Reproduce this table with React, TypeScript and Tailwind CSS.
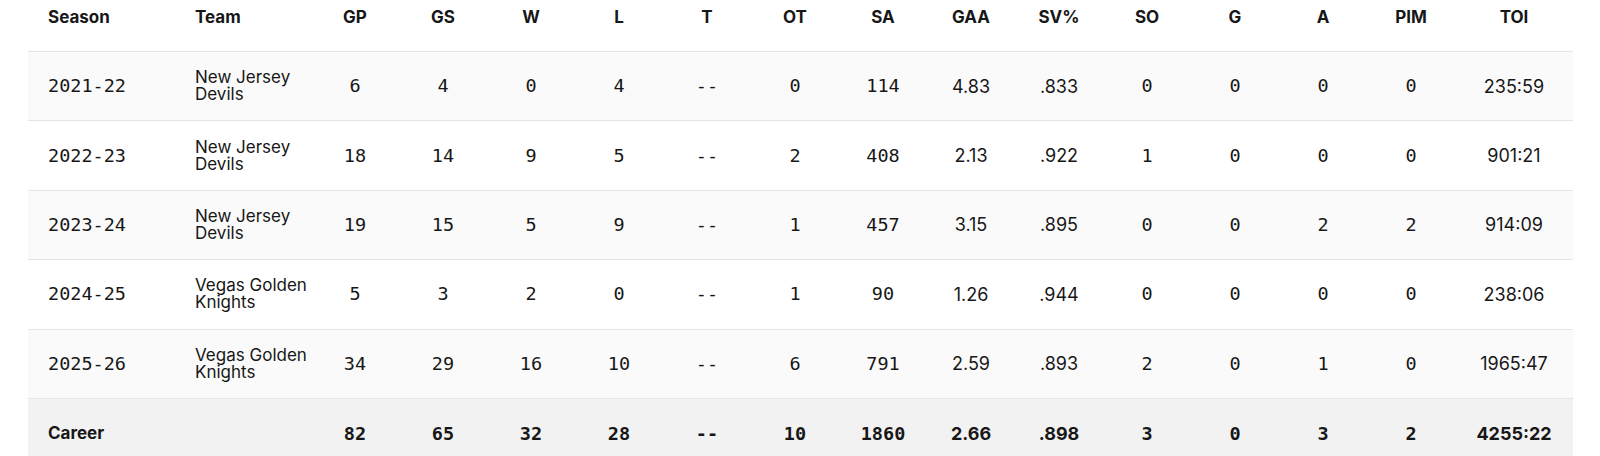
const cols = "grid grid-cols-[142px_141px_repeat(13,88px)_118px]"

const seasons = [
  { season: "2021-22", team: "New Jersey Devils", gp: 6, gs: 4, w: 0, l: 4, ot: 0, sa: 114, gaa: "4.83", sv: ".833", so: 0, g: 0, a: 0, pim: 0, toi: "235:59" },
  { season: "2022-23", team: "New Jersey Devils", gp: 18, gs: 14, w: 9, l: 5, ot: 2, sa: 408, gaa: "2.13", sv: ".922", so: 1, g: 0, a: 0, pim: 0, toi: "901:21" },
  { season: "2023-24", team: "New Jersey Devils", gp: 19, gs: 15, w: 5, l: 9, ot: 1, sa: 457, gaa: "3.15", sv: ".895", so: 0, g: 0, a: 2, pim: 2, toi: "914:09" },
  { season: "2024-25", team: "Vegas Golden Knights", gp: 5, gs: 3, w: 2, l: 0, ot: 1, sa: 90, gaa: "1.26", sv: ".944", so: 0, g: 0, a: 0, pim: 0, toi: "238:06" },
  { season: "2025-26", team: "Vegas Golden Knights", gp: 34, gs: 29, w: 16, l: 10, ot: 6, sa: 791, gaa: "2.59", sv: ".893", so: 2, g: 0, a: 1, pim: 0, toi: "1965:47" },
]

const headers = ["GP", "GS", "W", "L", "T", "OT", "SA", "GAA", "SV%", "SO", "G", "A", "PIM", "TOI"]

function Mono({ children }: { children: React.ReactNode }) {
  return <div className="text-center font-['DejaVu_Sans_Mono',monospace] text-[18.5px]">{children}</div>
}

function Sans({ children }: { children: React.ReactNode }) {
  return <div className="text-center text-[18px]">{children}</div>
}

export default function App() {
  return (
    <div className="min-h-screen bg-white font-['Inter',sans-serif] text-[#171717]">
      <div className="ml-[28px] w-[1545px]">
        {/* Header */}
        <div className={`${cols} h-[52px] border-b border-[#e5e5e5] text-[17px] font-bold leading-6 items-start pt-[5px]`}>
          <div className="pl-5">Season</div>
          <div className="pl-[25px]">Team</div>
          {headers.map((h) => (
            <div key={h} className="text-center">
              {h}
            </div>
          ))}
        </div>

        {/* Season rows */}
        {seasons.map((s, i) => (
          <div
            key={s.season}
            className={`${cols} h-[69.4px] items-center border-b border-[#e5e5e5] ${i % 2 === 0 ? "bg-[#fafafa]" : "bg-white"}`}
          >
            <div className="pl-5 font-['DejaVu_Sans_Mono',monospace] text-[18.5px]">{s.season}</div>
            <div className="pl-[25px] text-[17px] leading-[17px]">{s.team}</div>
            <Mono>{s.gp}</Mono>
            <Mono>{s.gs}</Mono>
            <Mono>{s.w}</Mono>
            <Mono>{s.l}</Mono>
            <Mono>--</Mono>
            <Mono>{s.ot}</Mono>
            <Mono>{s.sa}</Mono>
            <Sans>{s.gaa}</Sans>
            <Sans>{s.sv}</Sans>
            <Mono>{s.so}</Mono>
            <Mono>{s.g}</Mono>
            <Mono>{s.a}</Mono>
            <Mono>{s.pim}</Mono>
            <Sans>{s.toi}</Sans>
          </div>
        ))}

        {/* Career totals */}
        <div className={`${cols} h-[69px] items-center bg-[#f2f2f2] font-bold`}>
          <div className="pl-5 text-[17px]">Career</div>
          <div></div>
          <Mono>82</Mono>
          <Mono>65</Mono>
          <Mono>32</Mono>
          <Mono>28</Mono>
          <Mono>--</Mono>
          <Mono>10</Mono>
          <Mono>1860</Mono>
          <Sans>2.66</Sans>
          <Sans>.898</Sans>
          <Mono>3</Mono>
          <Mono>0</Mono>
          <Mono>3</Mono>
          <Mono>2</Mono>
          <Sans>4255:22</Sans>
        </div>
      </div>
    </div>
  )
}
